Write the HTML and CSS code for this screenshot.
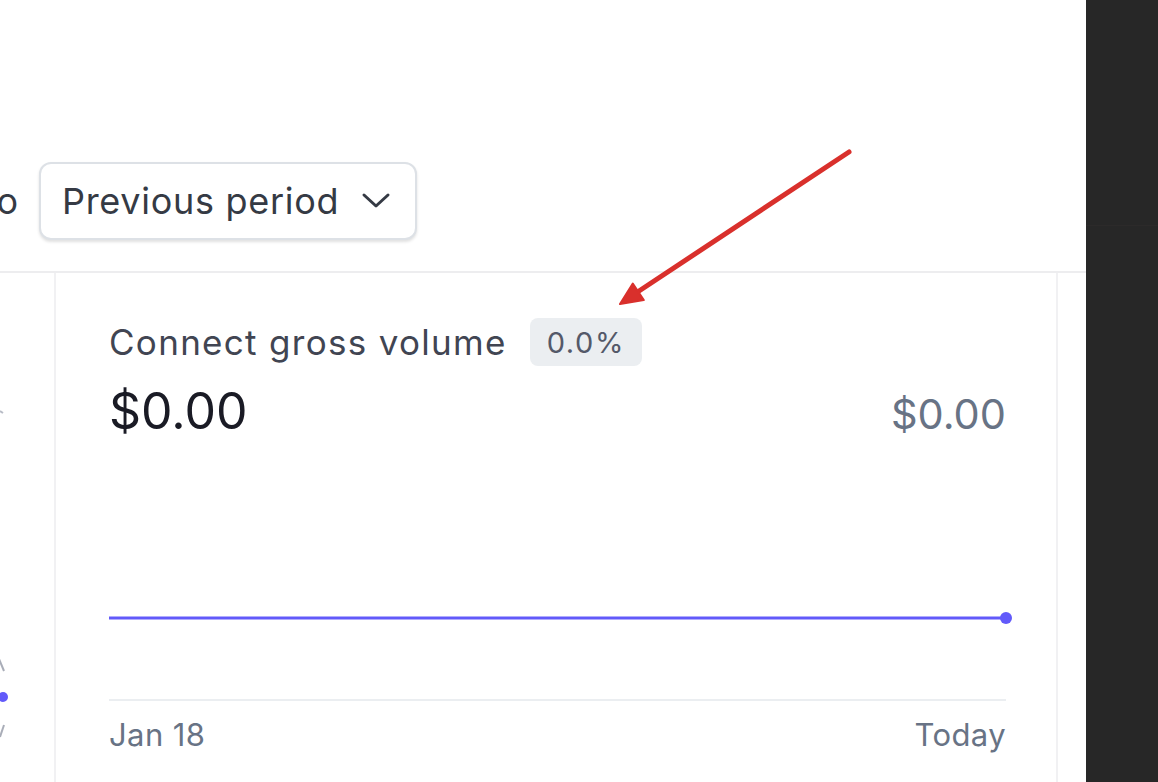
FILE: index.html
```html
<!DOCTYPE html>
<html lang="en">
<head>
<meta charset="utf-8">
<title>Connect gross volume</title>
<link rel="stylesheet" href="styles.css">
</head>
<body>
<div class="page">
  <main class="main">
    <div class="toolbar">
      <div class="compare-label"><span>Compare to</span></div>
      <button class="period-btn" type="button">
        <span>Previous period</span>
        <svg class="chev" width="30" height="18" viewBox="0 0 30 18"><path d="M3 3 L15 14 L27 3" fill="none" stroke="#353a44" stroke-width="3" stroke-linecap="round" stroke-linejoin="round"/></svg>
      </button>
    </div>
    <div class="content">
      <div class="left-stub">
        <svg width="54" height="509" viewBox="0 0 54 509">
          <path d="M0 138 L3 140" stroke="#b8bcc6" stroke-width="2"/>
          <path d="M-1 386 L4 398" stroke="#a9adb8" stroke-width="2"/>
          <circle cx="3" cy="424" r="5" fill="#625afa"/>
          <path d="M4 452 L0 464" stroke="#a9adb8" stroke-width="2"/>
        </svg>
      </div>
      <section class="card">
        <div class="title-row">
          <h2 class="title">Connect gross volume</h2>
          <span class="badge">0.0%</span>
        </div>
        <div class="value-row">
          <span class="value">$0.00</span>
          <span class="prev-value">$0.00</span>
        </div>
        <div class="chart">
          <svg width="897" height="257" viewBox="0 0 897 257">
            <line x1="0" y1="174" x2="897" y2="174" stroke="#625afa" stroke-width="3"/>
            <circle cx="897" cy="174" r="6" fill="#625afa"/>
          </svg>
        </div>
        <div class="axis-labels">
          <span>Jan 18</span>
          <span>Today</span>
        </div>
      </section>
    </div>
    <svg class="annotation" width="1086" height="782" viewBox="0 0 1086 782">
      <line x1="849" y1="152" x2="636" y2="293" stroke="#d9302c" stroke-width="5" stroke-linecap="round"/>
      <polygon points="620,304 632.8,283.5 643.8,300.1" fill="#d9302c" stroke="#d9302c" stroke-width="2" stroke-linejoin="round"/>
    </svg>
  </main>
  <aside class="dark-panel">
    <div class="dark-top"></div>
    <div class="dark-bottom"></div>
  </aside>
</div>
</body>
</html>
```

FILE: styles.css
```css
html, body {
  margin: 0;
  padding: 0;
  background: #ffffff;
}

body {
  font-family: Inter, "Liberation Sans", Arial, sans-serif;
  color: #353a44;
}

.page {
  display: flex;
  width: 1158px;
  height: 782px;
  overflow: hidden;
}

.main {
  position: relative;
  width: 1086px;
  flex: none;
  overflow: hidden;
  background: #ffffff;
}

.toolbar {
  display: flex;
  align-items: center;
  gap: 21px;
  padding-top: 162px;
  height: 78px;
}

.compare-label {
  width: 18px;
  overflow: hidden;
  display: flex;
  justify-content: flex-end;
  white-space: nowrap;
  font-size: 36px;
  color: #353a44;
}

.period-btn {
  display: flex;
  align-items: center;
  gap: 22px;
  height: 78px;
  box-sizing: border-box;
  padding: 0 24px 0 21px;
  border: 2px solid #dde1e6;
  border-radius: 12px;
  background: #ffffff;
  box-shadow: 0 2px 3px rgba(0, 0, 0, 0.12);
  font-family: inherit;
  font-size: 36px;
  letter-spacing: 0.7px;
  color: #353a44;
}

.chev {
  display: block;
}

.content {
  display: flex;
  margin-top: 31px;
  border-top: 2px solid #ededef;
  height: 511px;
}

.left-stub {
  width: 54px;
  flex: none;
}

.left-stub svg {
  display: block;
}

.card {
  width: 1004px;
  flex: none;
  box-sizing: border-box;
  border-left: 2px solid #f1f1f3;
  border-right: 2px solid #f1f1f3;
  padding: 0 50px 0 53px;
}

.title-row {
  display: flex;
  align-items: center;
  gap: 23px;
  margin-top: 45px;
  height: 48px;
}

.title {
  margin: 0;
  font-size: 35px;
  font-weight: 400;
  letter-spacing: 1.3px;
  color: #414552;
}

.badge {
  display: flex;
  align-items: center;
  height: 48px;
  padding: 0 17px;
  border-radius: 8px;
  background: #ebeef1;
  font-size: 29px;
  letter-spacing: 1.6px;
  color: #545969;
}

.value-row {
  display: flex;
  justify-content: space-between;
  align-items: baseline;
  margin-top: 15px;
  line-height: 60px;
}

.value {
  font-size: 50px;
  color: #1a1b25;
}

.prev-value {
  font-size: 41.5px;
  color: #687385;
}

.chart {
  height: 255px;
  border-bottom: 2px solid #ebeef1;
}

.chart svg {
  display: block;
  overflow: visible;
}

.axis-labels {
  display: flex;
  justify-content: space-between;
  margin-top: 16px;
  font-size: 31px;
  line-height: 36px;
  letter-spacing: 0.4px;
  color: #687385;
}

.annotation {
  position: absolute;
  left: 0;
  top: 0;
  pointer-events: none;
}

.dark-panel {
  flex: 1;
  display: flex;
  flex-direction: column;
  background: #272727;
}

.dark-top {
  height: 225px;
}

.dark-bottom {
  flex: 1;
  border-top: 1px solid #2c2a2a;
}
```
